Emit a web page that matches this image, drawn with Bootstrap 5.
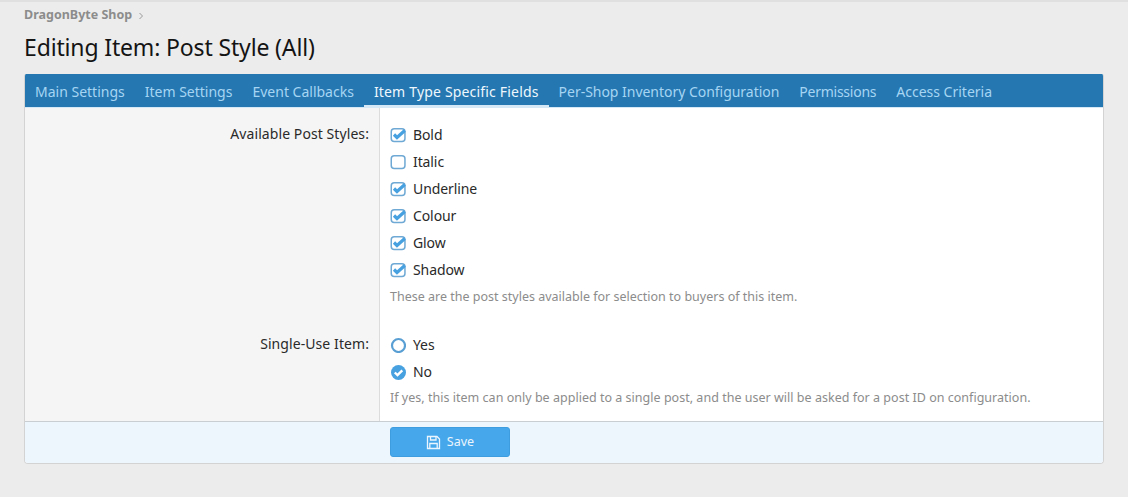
<!DOCTYPE html>
<html lang="en"><head><meta charset="utf-8"><title>Editing Item</title>
<link href="https://cdn.jsdelivr.net/npm/bootstrap@5.3.0/dist/css/bootstrap.min.css" rel="stylesheet">
<style>
html,body{height:497px;overflow:hidden}
body{background:#ececec;border-top:2px solid #e0e0e0;font-family:"Noto Sans","Open Sans",sans-serif;font-size:14px;color:#2a2a2a;padding:0 24px}
.crumb-row{height:30px;padding-top:4px;font-size:12.5px;font-weight:700;color:#8c8c8c;line-height:18px;gap:5px}
.crumb-sep{width:8px;height:8px;margin-top:6px}
.page-head{font-size:23px;line-height:30px;font-weight:400;color:#141414;margin:0 0 12px;letter-spacing:-.15px}
.panel-box{background:#fff;border:1px solid #d3d3d3;border-top:0;border-radius:2px 2px 4px 4px;width:1080px;overflow:hidden}
.tab-bar{background:#2577b1;height:34px;border-bottom:1px solid #d4e8f6;padding:0}
.tab-item{padding:0 10px;height:34px;line-height:35px;color:#a5d5f3;font-size:14px;white-space:nowrap}
.tab-item.is-on{color:#eef7fd;border-bottom:3px solid #d4e8f6;letter-spacing:.18px}
.tab-item.is-snug{letter-spacing:-.03px}
.tab-item.is-tight{letter-spacing:-.25px}
.form-line{display:flex}
.form-label-col{width:355px;flex:none;background:#f5f5f5;border-right:1px solid #dcdcdc;text-align:right;padding-right:10px;padding-top:13px;line-height:26px;letter-spacing:.08px}
.form-val-col{padding:13px 10px 0;flex:1}
.opt-row{height:27px;line-height:26px;gap:7px;letter-spacing:-.1px}
.opt-ico{width:16px;height:16px;flex:none}
.hint-text{font-size:12.5px;color:#8c8c8c;line-height:18px;margin-top:5px}
.line-a .form-label-col,.line-a .form-val-col{height:210px}
.line-b .form-label-col,.line-b .form-val-col{height:103px}
.line-b .hint-text{margin-top:4px;letter-spacing:.02px}
.submit-bar{background:#edf6fd;border-top:1px solid #c9ced2;height:42px;padding:5px 0 0 365px}
.save-btn{width:120px;height:30px;background:#47a7eb;border:1px solid #3e9ddf;border-radius:3px;color:#eaf5fd;font-size:12.5px;padding:1px 0 0;gap:6px}
.save-btn:hover{background:#47a7eb;color:#eaf5fd}
</style></head><body>
<div class="d-flex align-items-start crumb-row"><span>DragonByte Shop</span>
<svg class="crumb-sep" viewBox="0 0 8 8"><path d="M2.5 1l3 3-3 3" fill="none" stroke="#9a9a9a" stroke-width="1"/></svg></div>
<h1 class="page-head">Editing Item: Post Style (All)</h1>
<div class="panel-box">
<div class="tab-bar d-flex">
<div class="tab-item">Main Settings</div><div class="tab-item">Item Settings</div><div class="tab-item">Event Callbacks</div><div class="tab-item is-on">Item Type Specific Fields</div><div class="tab-item is-snug">Per-Shop Inventory Configuration</div><div class="tab-item is-tight">Permissions</div><div class="tab-item">Access Criteria</div>
</div>
<div class="form-line line-a">
<div class="form-label-col">Available Post Styles:</div>
<div class="form-val-col">
<div class="d-flex align-items-center opt-row"><svg class="opt-ico" viewBox="0 0 16 16"><rect x="1.250" y="1.750" width="13.700" height="12.700" rx="3" fill="none" stroke="#6ea8d4" stroke-width="1.500"/><path d="M4 7.500l3 3 7.800-7" fill="none" stroke="#47a1e0" stroke-width="3.200"/></svg>Bold</div>
<div class="d-flex align-items-center opt-row"><svg class="opt-ico" viewBox="0 0 16 16"><rect x="1.250" y="1.750" width="13.700" height="12.700" rx="3" fill="none" stroke="#6ea8d4" stroke-width="1.500"/></svg>Italic</div>
<div class="d-flex align-items-center opt-row"><svg class="opt-ico" viewBox="0 0 16 16"><rect x="1.250" y="1.750" width="13.700" height="12.700" rx="3" fill="none" stroke="#6ea8d4" stroke-width="1.500"/><path d="M4 7.500l3 3 7.800-7" fill="none" stroke="#47a1e0" stroke-width="3.200"/></svg>Underline</div>
<div class="d-flex align-items-center opt-row"><svg class="opt-ico" viewBox="0 0 16 16"><rect x="1.250" y="1.750" width="13.700" height="12.700" rx="3" fill="none" stroke="#6ea8d4" stroke-width="1.500"/><path d="M4 7.500l3 3 7.800-7" fill="none" stroke="#47a1e0" stroke-width="3.200"/></svg>Colour</div>
<div class="d-flex align-items-center opt-row"><svg class="opt-ico" viewBox="0 0 16 16"><rect x="1.250" y="1.750" width="13.700" height="12.700" rx="3" fill="none" stroke="#6ea8d4" stroke-width="1.500"/><path d="M4 7.500l3 3 7.800-7" fill="none" stroke="#47a1e0" stroke-width="3.200"/></svg>Glow</div>
<div class="d-flex align-items-center opt-row"><svg class="opt-ico" viewBox="0 0 16 16"><rect x="1.250" y="1.750" width="13.700" height="12.700" rx="3" fill="none" stroke="#6ea8d4" stroke-width="1.500"/><path d="M4 7.500l3 3 7.800-7" fill="none" stroke="#47a1e0" stroke-width="3.200"/></svg>Shadow</div>
<div class="hint-text">These are the post styles available for selection to buyers of this item.</div>
</div></div>
<div class="form-line line-b">
<div class="form-label-col">Single-Use Item:</div>
<div class="form-val-col">
<div class="d-flex align-items-center opt-row"><svg class="opt-ico" viewBox="0 0 16 16"><circle cx="8.500" cy="8.500" r="6.500" fill="none" stroke="#5a9fd4" stroke-width="2.200"/></svg>Yes</div>
<div class="d-flex align-items-center opt-row"><svg class="opt-ico" viewBox="0 0 16 16"><circle cx="8.500" cy="8.500" r="7.500" fill="#47a1e0"/><path d="M4.800 8.500l2.700 2.600 4.800-4.700" fill="none" stroke="#fff" stroke-width="2.400"/></svg>No</div>
<div class="hint-text">If yes, this item can only be applied to a single post, and the user will be asked for a post ID on configuration.</div>
</div></div>
<div class="submit-bar">
<button type="button" class="btn save-btn d-inline-flex align-items-center justify-content-center">
<svg width="15" height="15" viewBox="0 0 15 15"><path d="M1.500 1.500h9.500l2.500 2.500v9.500h-12z" fill="none" stroke="#eaf5fd" stroke-width="1.300"/><path d="M4.500 1.500v3.500h5.500v-3.500M3.800 13.500v-5h7.400v5" fill="none" stroke="#eaf5fd" stroke-width="1.300"/></svg>Save</button>
</div>
</div>
</body></html>
